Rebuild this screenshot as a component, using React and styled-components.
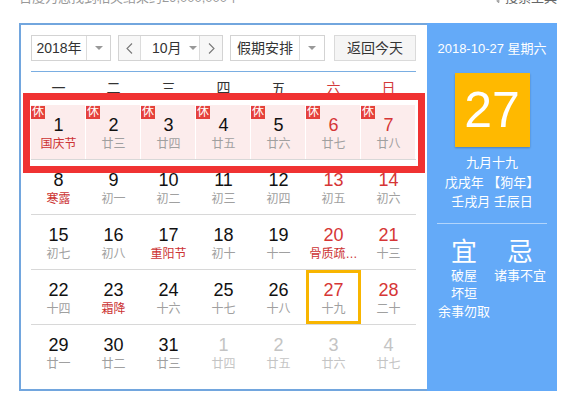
import React from "react";
import styled, { createGlobalStyle } from "styled-components";

const GlobalStyle = createGlobalStyle`
  html, body { margin: 0; padding: 0; background: #fff; }
  body {
    font-family: "Liberation Sans", Arial, "Noto Sans CJK SC", sans-serif;
    overflow: hidden;
  }
`;

const Page = styled.div`
  width: 538px;
  margin-left: 19px;
`;

const TopBar = styled.div`
  display: flex;
  justify-content: space-between;
  align-items: center;
  height: 20px;
  line-height: 20px;
  margin-top: -12px;
  margin-bottom: 15px;
  font-size: 13px;
  color: #999;
`;

const ToolLink = styled.span`
  display: flex;
  align-items: center;
  gap: 3px;
  color: #666;
`;

const Calendar = styled.div`
  display: flex;
`;

const LeftPanel = styled.div`
  position: relative;
  box-sizing: border-box;
  width: 408px;
  border: 2px solid #72a6de;
  border-right: none;
  padding: 10px 11px 10px 10px;
  background: #fff;
`;

const Toolbar = styled.div`
  display: flex;
  height: 26px;
  font-size: 14px;
  color: #333;
`;

const Box = styled.div`
  box-sizing: border-box;
  display: flex;
  width: ${(p) => p.$w}px;
  height: 26px;
  margin-right: ${(p) => p.$mr || 0}px;
  border: 1px solid #d3d3d3;
  background: ${(p) => p.$bg || "#fff"};
`;

const BoxText = styled.div`
  flex: 1;
  text-align: center;
  line-height: 24px;
`;

const ArrowCell = styled.div`
  width: ${(p) => p.$w || 24}px;
  box-sizing: border-box;
  border-left: 1px solid #dcdcdc;
  display: flex;
  align-items: center;
  justify-content: center;
`;

const Caret = styled.span`
  width: 0;
  height: 0;
  border-left: 4px solid transparent;
  border-right: 4px solid transparent;
  border-top: 4px solid #999;
`;

const NavBtn = styled.div`
  box-sizing: border-box;
  width: ${(p) => p.$w}px;
  display: flex;
  align-items: center;
  justify-content: center;
  background: #f7f7f7;
  border-left: ${(p) => (p.$side === "right" ? "1px solid #dcdcdc" : "none")};
  border-right: ${(p) => (p.$side === "left" ? "1px solid #dcdcdc" : "none")};
`;

const MonthMid = styled.div`
  flex: 1;
  display: flex;
  align-items: center;
  padding-left: 11px;
  gap: 7px;
  line-height: 24px;
`;

const TodayBtn = styled.div`
  box-sizing: border-box;
  width: 82px;
  height: 26px;
  line-height: 24px;
  text-align: center;
  border: 1px solid #dadada;
  background: #f5f5f5;
`;

const Grid = styled.div`
  margin-top: 10px;
  border-top: 1px solid #7aaee2;
`;

const WeekRow = styled.div`
  display: grid;
  grid-template-columns: repeat(7, 55px);
  height: 33px;
  line-height: 33px;
  font-size: 14px;
  text-align: center;
`;

const WeekName = styled.div`
  color: ${(p) => (p.$weekend ? "#d33a3a" : "#333")};
`;

const Row = styled.div`
  display: grid;
  grid-template-columns: repeat(7, 55px);
  border-bottom: ${(p) => (p.$last ? "none" : "1px solid #d8d8d8")};
`;

const Cell = styled.div`
  position: relative;
  box-sizing: border-box;
  height: 54px;
  padding-top: 9px;
  text-align: center;
  background: ${(p) => (p.$rest ? "#fcecec" : "#fff")};
  box-shadow: ${(p) =>
    p.$today
      ? "inset 0 0 0 3px #f8b500"
      : p.$rest
      ? "inset -1px 0 0 #fff"
      : "none"};
`;

const DayNum = styled.div`
  font-size: 18px;
  line-height: 22px;
  color: ${(p) => (p.$other ? "#c4c4c4" : p.$weekend ? "#d63636" : "#111")};
`;

const Lunar = styled.div`
  font-size: 12px;
  line-height: 16px;
  white-space: nowrap;
  overflow: hidden;
  color: ${(p) => (p.$other ? "#c4c4c4" : p.$fest ? "#cc3333" : "#a0a0a0")};
`;

const RestBadge = styled.span`
  position: absolute;
  top: 1px;
  left: 0;
  width: 14px;
  height: 13px;
  line-height: 13px;
  font-size: 12px;
  text-align: center;
  color: #fff;
  background: #e5413b;
`;

const Highlight = styled.div`
  position: absolute;
  left: 2px;
  top: 68px;
  width: 402px;
  height: 80px;
  box-sizing: border-box;
  border: 7px solid #f03232;
  pointer-events: none;
`;

const Sidebar = styled.div`
  box-sizing: border-box;
  width: 130px;
  background: #64aaf8;
  color: #fff;
  text-align: center;
  padding: 17px 9px 0;
  font-size: 13px;
`;

const SideDate = styled.div`
  line-height: 18px;
`;

const BigDay = styled.div`
  width: 75px;
  height: 74px;
  margin: 15px auto 0;
  background: #ffb900;
  font-size: 50px;
  line-height: 74px;
  box-shadow: 0 1px 2px rgba(0, 0, 0, 0.25);
`;

const LunarInfo = styled.div`
  margin-top: 6px;
  line-height: 19.5px;
`;

const SideDivider = styled.div`
  margin: 11px 1px 0;
  border-top: 1px solid rgba(255, 255, 255, 0.5);
`;

const YiJi = styled.div`
  display: grid;
  grid-template-columns: 56px 56px;
  margin-top: 13px;
`;

const YiJiCol = styled.div`
  display: flex;
  flex-direction: column;
  align-items: center;
`;

const YiJiTitle = styled.div`
  font-size: 26px;
  line-height: 30px;
`;

const YiJiText = styled.div`
  line-height: 18px;
  white-space: nowrap;
`;

const Chevron = ({ dir }) => (
  <svg width="7" height="11" viewBox="0 0 7 11">
    <path
      d={dir === "left" ? "M6 0.5 L1 5.5 L6 10.5" : "M1 0.5 L6 5.5 L1 10.5"}
      fill="none"
      stroke="#777"
      strokeWidth="1.1"
    />
  </svg>
);

const Funnel = () => (
  <svg width="8" height="10" viewBox="0 0 8 10">
    <path d="M0.5 0.5 H7.5 L4.8 4.5 V9.5 L3.2 8.5 V4.5 Z" fill="none" stroke="#888" strokeWidth="1" />
  </svg>
);

const weeks = [
  [
    [1, "国庆节", true], [2, "廿三"], [3, "廿四"], [4, "廿五"], [5, "廿六"], [6, "廿七"], [7, "廿八"],
  ],
  [
    [8, "寒露", true], [9, "初一"], [10, "初二"], [11, "初三"], [12, "初四"], [13, "初五"], [14, "初六"],
  ],
  [
    [15, "初七"], [16, "初八"], [17, "重阳节", true], [18, "初十"], [19, "十一"], [20, "骨质疏…", true], [21, "十三"],
  ],
  [
    [22, "十四"], [23, "霜降", true], [24, "十六"], [25, "十七"], [26, "十八"], [27, "十九"], [28, "二十"],
  ],
  [
    [29, "廿一"], [30, "廿二"], [31, "廿三"], [1, "廿四", false, true], [2, "廿五", false, true], [3, "廿六", false, true], [4, "廿七", false, true],
  ],
];

const weekNames = ["一", "二", "三", "四", "五", "六", "日"];
const yi = ["破屋", "坏垣", "余事勿取"];
const ji = ["诸事不宜"];

export default function App() {
  return (
    <>
      <GlobalStyle />
      <Page>
        <TopBar>
          <span>百度为您找到相关结果约29,000,000个</span>
          <ToolLink>
            <Funnel />
            搜索工具
          </ToolLink>
        </TopBar>
        <Calendar>
          <LeftPanel>
            <Toolbar>
              <Box $w={80} $mr={7}>
                <BoxText>2018年</BoxText>
                <ArrowCell>
                  <Caret />
                </ArrowCell>
              </Box>
              <Box $w={105} $mr={7}>
                <NavBtn $w={22} $side="left">
                  <Chevron dir="left" />
                </NavBtn>
                <MonthMid>
                  <span>10月</span>
                  <Caret />
                </MonthMid>
                <NavBtn $w={23} $side="right">
                  <Chevron dir="right" />
                </NavBtn>
              </Box>
              <Box $w={95} $mr={9}>
                <BoxText>假期安排</BoxText>
                <ArrowCell $w={25}>
                  <Caret />
                </ArrowCell>
              </Box>
              <TodayBtn>返回今天</TodayBtn>
            </Toolbar>
            <Grid>
              <WeekRow>
                {weekNames.map((n, i) => (
                  <WeekName key={n} $weekend={i >= 5}>
                    {n}
                  </WeekName>
                ))}
              </WeekRow>
              {weeks.map((week, wi) => (
                <Row key={wi} $last={wi === weeks.length - 1}>
                  {week.map(([day, lunar, fest, other], di) => {
                    const rest = wi === 0;
                    const today = wi === 3 && di === 5;
                    return (
                      <Cell key={di} $rest={rest} $today={today}>
                        {rest && <RestBadge>休</RestBadge>}
                        <DayNum $weekend={di >= 5} $other={other}>
                          {day}
                        </DayNum>
                        <Lunar $fest={fest} $other={other}>
                          {lunar}
                        </Lunar>
                      </Cell>
                    );
                  })}
                </Row>
              ))}
            </Grid>
            <Highlight />
          </LeftPanel>
          <Sidebar>
            <SideDate>2018-10-27 星期六</SideDate>
            <BigDay>27</BigDay>
            <LunarInfo>
              <div>九月十九</div>
              <div>戊戌年 【狗年】</div>
              <div>壬戌月 壬辰日</div>
            </LunarInfo>
            <SideDivider />
            <YiJi>
              <YiJiCol>
                <YiJiTitle>宜</YiJiTitle>
                {yi.map((t) => (
                  <YiJiText key={t}>{t}</YiJiText>
                ))}
              </YiJiCol>
              <YiJiCol>
                <YiJiTitle>忌</YiJiTitle>
                {ji.map((t) => (
                  <YiJiText key={t}>{t}</YiJiText>
                ))}
              </YiJiCol>
            </YiJi>
          </Sidebar>
        </Calendar>
      </Page>
    </>
  );
}
